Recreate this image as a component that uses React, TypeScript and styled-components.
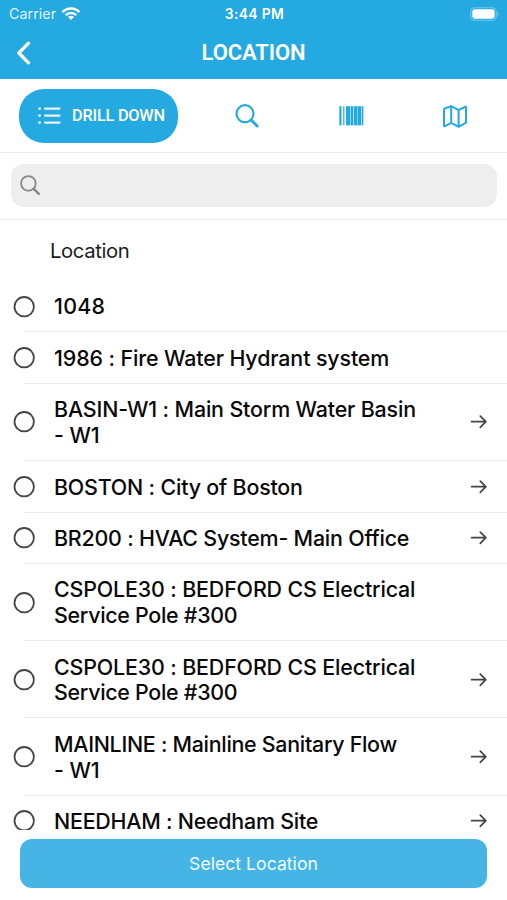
import React from "react";
import styled, { createGlobalStyle } from "styled-components";

const BLUE = "#25a9e1";

const GlobalStyle = createGlobalStyle`
  *, *::before, *::after { box-sizing: border-box; }
  body { margin: 0; background: #fff; font-family: Inter, "Liberation Sans", sans-serif; }
  button { font: inherit; border: 0; padding: 0; margin: 0; background: none; }
  svg { display: block; }
`;

const Screen = styled.div`
  width: 507px;
  height: 900px;
  display: flex;
  flex-direction: column;
  overflow: hidden;
  background: #fff;
`;

const Header = styled.header`
  flex: none;
  height: 79px;
  background: ${BLUE};
  color: #fff;
`;

const StatusBar = styled.div`
  height: 27px;
  padding: 0 7px 0 9px;
  display: grid;
  grid-template-columns: 1fr auto 1fr;
  align-items: center;
`;

const Carrier = styled.div`
  display: flex;
  align-items: center;
  gap: 5px;
  font-size: 14.2px;
  line-height: 26px;
  letter-spacing: 0.08px;
  color: #e2f5fd;
`;

const Clock = styled.div`
  font-size: 13.8px;
  line-height: 26px;
  font-weight: 600;
  letter-spacing: 0.4px;
`;

const Battery = styled.div`
  justify-self: end;
`;

const NavBar = styled.div`
  height: 52px;
  padding: 0 16px;
  display: grid;
  grid-template-columns: 40px 1fr 40px;
  align-items: center;
`;

const Title = styled.h1`
  margin: 0;
  text-align: center;
  font: 600 22px/50px Roboto, sans-serif;
  letter-spacing: -0.1px;
`;

const Modes = styled.nav`
  flex: none;
  height: 74px;
  padding: 0 0 0 19px;
  display: flex;
  align-items: center;
  border-bottom: 1px solid #e9e9e9;
  color: ${BLUE};
`;

const ActiveMode = styled.button`
  width: 159px;
  height: 54px;
  padding-left: 18px;
  display: flex;
  align-items: center;
  gap: 10px;
  border-radius: 25px;
  background: ${BLUE};
  color: #fff;
  font: 500 16.3px/54px Roboto, sans-serif;
  letter-spacing: -0.2px;
  white-space: nowrap;
`;

const OtherModes = styled.div`
  display: grid;
  grid-template-columns: repeat(3, 104px);
  justify-items: center;
  margin-left: 16.5px;
`;

const ModeButton = styled.button`
  width: 32px;
  height: 32px;
  color: inherit;
`;

const SearchBar = styled.div`
  flex: none;
  height: 67px;
  padding: 11px 10px 0 11px;
  border-bottom: 1px solid #e9e9e9;
`;

const SearchField = styled.div`
  height: 43px;
  padding-left: 9px;
  display: flex;
  align-items: center;
  border-radius: 13px;
  background: #eee;
  color: #868686;
`;

const ListHeading = styled.h2`
  flex: none;
  height: 61px;
  margin: 0;
  padding-left: 50px;
  font-size: 20.3px;
  font-weight: 400;
  line-height: 62px;
  letter-spacing: -0.38px;
  color: #1c1c1c;
`;

const List = styled.ul`
  flex: none;
  height: 548.8px;
  margin: 0;
  padding: 0;
  overflow: hidden;
  list-style: none;
`;

const Row = styled.li`
  margin-left: 25px;
  padding: 12.25px 19px 11.25px 0;
  display: flex;
  align-items: center;
  border-bottom: 1px solid #e9e9e9;
  color: #333;
`;

const RadioIcon = styled.svg`
  flex: none;
  margin-left: -12px;
`;

const Name = styled.span`
  flex: 1;
  margin-left: 19px;
  padding-top: 1.2px;
  font-size: 21.4px;
  font-weight: 500;
  line-height: 25.75px;
  color: #090909;
`;

const NameLine = styled.span<{ $tracking: number }>`
  display: block;
  letter-spacing: ${(p) => p.$tracking}px;
  white-space: nowrap;
`;

const Footer = styled.footer`
  padding: 9px 20px 0;
`;

const SelectButton = styled.button`
  display: block;
  width: 467px;
  height: 49px;
  border-radius: 12px;
  background: #46b5e5;
  color: #f0fafe;
  font-size: 17.6px;
  line-height: 49px;
  letter-spacing: 0.03px;
`;

const WifiIcon = () => (
  <svg width="20" height="16" viewBox="0 0 20 16" fill="none" stroke="#fff" strokeWidth="2.5">
    <path d="M1.5 6.1C6.3 1.2 13.7 1.2 18.5 6.1" />
    <path d="M4.7 9.2C7.8 6.2 12.2 6.2 15.3 9.2" />
    <path d="M7 10.9C8.8 9.5 11.2 9.5 13 10.9L10 14Z" fill="#fff" stroke="none" />
  </svg>
);

const BatteryIcon = () => (
  <svg width="30" height="14" viewBox="0 0 30 14">
    <rect x="0.7" y="0.7" width="25.6" height="12.6" rx="4" fill="none" stroke="#74c8ec" strokeWidth="1.1" />
    <rect x="2.3" y="2.3" width="22.4" height="9.4" rx="2.4" fill="#fff" />
    <path d="M27.6 5.2c1.7.5 1.7 3.1 0 3.6z" fill="#74c8ec" />
  </svg>
);

const BackIcon = () => (
  <svg width="16" height="24" viewBox="0 0 16 24" fill="none" stroke="#fff" strokeWidth="3.3" strokeLinecap="round" strokeLinejoin="round">
    <path d="M12.5 2.2L2.8 12L12.5 21.8" />
  </svg>
);

const ListIcon = () => (
  <svg width="25" height="18" viewBox="0 0 25 18" fill="none" stroke="#e6f8ff" strokeWidth="2.1" strokeLinecap="round">
    <path d="M8 1.6H22.5M8 8.6H22.5M8 15.6H22.5" />
    <path d="M2.5 1.6H2.6M2.5 8.6H2.6M2.5 15.6H2.6" strokeWidth="2.9" />
  </svg>
);

const MagnifierIcon = () => (
  <svg width="32" height="32" viewBox="0 0 32 32" fill="none" stroke="currentColor" strokeLinecap="round">
    <circle cx="14" cy="13.7" r="8.5" strokeWidth="2.2" />
    <path d="M20.3 20.1L26.2 26" strokeWidth="2.9" />
  </svg>
);

const BarcodeIcon = () => (
  <svg width="32" height="32" viewBox="0 0 32 32" fill="currentColor">
    <path d="M4.3 6.3h2.2v19H4.3zM8.2 6.3h1.2v19H8.2zM11 6.3h4.2v19H11zM15.9 6.3H18v19h-2.1zM18.9 6.3h3.2v19h-3.2zM22.7 6.3h3.5v19h-3.5zM27 6.3h1.3v19H27z" />
    <path d="M11 6.3h17.3v19H11z" opacity="0.3" />
  </svg>
);

const MapIcon = () => (
  <svg width="32" height="32" viewBox="0 0 32 32" fill="none" stroke="currentColor" strokeWidth="2" strokeLinejoin="round">
    <path d="M5 9.6Q5 8.9 5.7 8.5L12.2 6.1L19.6 10.2L26 6.8Q27 6.4 27 7.4V22.7L19.6 26.8L12.2 22.9L6 26.2Q5 26.6 5 25.6ZM12.2 6.1V22.9M19.6 10.2V26.8" />
  </svg>
);

const FieldSearchIcon = () => (
  <svg width="21" height="21" viewBox="0 0 21 21" fill="none" stroke="currentColor" strokeLinecap="round">
    <circle cx="8.4" cy="8.4" r="7.3" strokeWidth="1.8" />
    <path d="M13.8 13.8L18.8 18.8" strokeWidth="2.4" />
  </svg>
);

const ArrowIcon = () => (
  <svg width="18" height="16" viewBox="0 0 18 16" fill="none" stroke="#444" strokeWidth="1.7" strokeLinecap="round" strokeLinejoin="round">
    <path d="M1.6 7.7H15.8M10.3 2.1L15.8 7.7L10.3 13.3" />
  </svg>
);

const Radio = () => (
  <RadioIcon width="22" height="22" viewBox="0 0 22 22" fill="none" stroke="#464646" strokeWidth="1.8">
    <circle cx="11.2" cy="10.7" r="9.7" />
  </RadioIcon>
);

interface Line {
  text: string;
  tracking: number;
}

interface Location {
  lines: Line[];
  hasChildren?: boolean;
}

const cspole: Line[] = [
  { text: "CSPOLE30 : BEDFORD CS Electrical", tracking: -0.14 },
  { text: "Service Pole #300", tracking: -0.28 },
];

const locations: Location[] = [
  { lines: [{ text: "1048", tracking: 0.3 }] },
  { lines: [{ text: "1986 : Fire Water Hydrant system", tracking: -0.11 }] },
  {
    lines: [
      { text: "BASIN-W1 : Main Storm Water Basin", tracking: -0.15 },
      { text: "- W1", tracking: -0.1 },
    ],
    hasChildren: true,
  },
  { lines: [{ text: "BOSTON : City of Boston", tracking: -0.18 }], hasChildren: true },
  { lines: [{ text: "BR200 : HVAC System- Main Office", tracking: -0.2 }], hasChildren: true },
  { lines: cspole },
  { lines: cspole, hasChildren: true },
  {
    lines: [
      { text: "MAINLINE : Mainline Sanitary Flow", tracking: -0.28 },
      { text: "- W1", tracking: -0.1 },
    ],
    hasChildren: true,
  },
  { lines: [{ text: "NEEDHAM : Needham Site", tracking: -0.22 }], hasChildren: true },
];

export default function App() {
  return (
    <Screen>
      <GlobalStyle />
      <Header>
        <StatusBar>
          <Carrier>
            Carrier <WifiIcon />
          </Carrier>
          <Clock>3:44 PM</Clock>
          <Battery>
            <BatteryIcon />
          </Battery>
        </StatusBar>
        <NavBar>
          <BackIcon />
          <Title>LOCATION</Title>
        </NavBar>
      </Header>
      <Modes>
        <ActiveMode>
          <ListIcon />
          DRILL DOWN
        </ActiveMode>
        <OtherModes>
          <ModeButton aria-label="Search"><MagnifierIcon /></ModeButton>
          <ModeButton aria-label="Barcode"><BarcodeIcon /></ModeButton>
          <ModeButton aria-label="Map"><MapIcon /></ModeButton>
        </OtherModes>
      </Modes>
      <SearchBar>
        <SearchField>
          <FieldSearchIcon />
        </SearchField>
      </SearchBar>
      <ListHeading>Location</ListHeading>
      <List>
        {locations.map((location, index) => (
          <Row key={index}>
            <Radio />
            <Name>
              {location.lines.map((line) => (
                <NameLine key={line.text} $tracking={line.tracking}>
                  {line.text}
                </NameLine>
              ))}
            </Name>
            {location.hasChildren && <ArrowIcon />}
          </Row>
        ))}
      </List>
      <Footer>
        <SelectButton>Select Location</SelectButton>
      </Footer>
    </Screen>
  );
}
